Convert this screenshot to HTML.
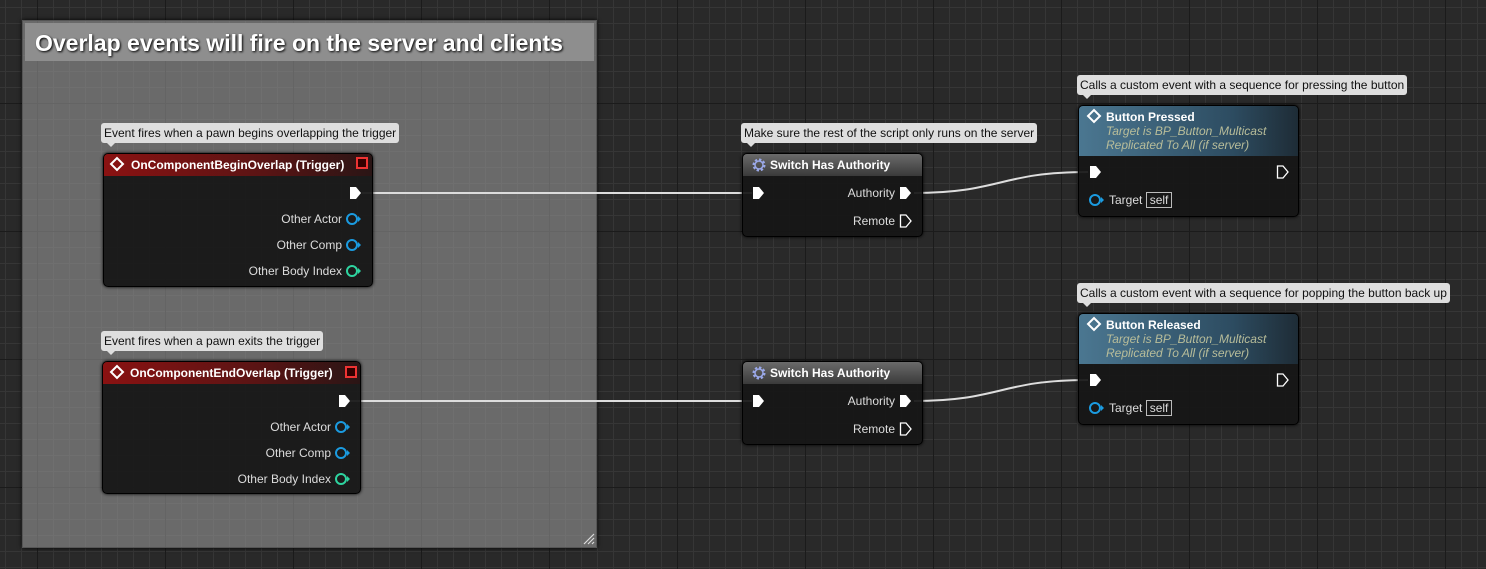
<!DOCTYPE html>
<html><head><style>
*{margin:0;padding:0;box-sizing:border-box}
body{width:1486px;height:569px;overflow:hidden;position:relative;font-family:"Liberation Sans",sans-serif;
background-color:#292929;
background-image:linear-gradient(90deg,#1b1b1b 1px,transparent 1px),linear-gradient(0deg,#1b1b1b 1px,transparent 1px),linear-gradient(90deg,#363636 1px,transparent 1px),linear-gradient(0deg,#363636 1px,transparent 1px);
background-size:128px 128px,128px 128px,16px 16px,16px 16px;
background-position:37px 0,0 104px,5px 0,0 8px;}
.abs{position:absolute}
.cm{left:22px;top:20px;width:575px;height:528px;background:rgba(150,150,150,.6);border:1px solid #555;box-shadow:0 0 4px #000}
.cmh{position:absolute;left:2px;top:2px;right:2px;height:38px;background:#8e8e8e;color:#fff;font-weight:bold;font-size:23px;line-height:40px;padding-left:10px;text-shadow:1px 1px 2px #000}
.tip{position:absolute;height:20px;background:#dedede;border-radius:3px;color:#111;font-size:12px;line-height:20px;padding:0 3px;white-space:nowrap}
.tip:after{content:"";position:absolute;left:6px;bottom:-4px;border:4px solid transparent;border-top-color:#dedede;border-bottom:0}
.node{position:absolute;background:rgba(22,22,22,.93);border:1px solid #000;border-radius:5px;box-shadow:0 0 3px #000;color:#ddd;font-size:12px}
.hd{height:22px;border-radius:4px 4px 0 0;color:#fff;font-weight:bold;font-size:12px;line-height:22px;padding-left:27px;position:relative}
.red{background:linear-gradient(90deg,#8a1212,#5a1414 60%,#2a1515)}
.gray{background:linear-gradient(180deg,#6a6a6a,#3a3a3a)}
.blue{background:linear-gradient(90deg,#4b7791,#2d4c61 70%,#1e2c36);height:50px;line-height:14px;padding-top:4px}
.sub{font-style:italic;font-weight:normal;color:#b8bd9a}
.lbl{position:absolute;font-size:12px;color:#ddd;white-space:nowrap}
svg{position:absolute;left:0;top:0}
</style></head><body>
<div class="abs cm"><div class="cmh">Overlap events will fire on the server and clients</div></div>
<svg width="1486" height="569">
<path d="M362 193 L752 193" stroke="#ddd" stroke-width="2" fill="none"/>
<path d="M914 193 C1000 193 1000 172 1088 172" stroke="#ddd" stroke-width="2" fill="none"/>
<path d="M350 401 L752 401" stroke="#ddd" stroke-width="2" fill="none"/>
<path d="M914 401 C1000 401 1000 380 1088 380" stroke="#ddd" stroke-width="2" fill="none"/>
<path d="M584 544 L594 534 M588 544 L594 538 M592 544 L594 542" stroke="#ddd" stroke-width="1.2"/>
</svg>

<div class="tip" style="left:101px;top:123px">Event fires when a pawn begins overlapping the trigger</div>
<div class="node" style="left:103px;top:153px;width:270px;height:134px"><div class="hd red">OnComponentBeginOverlap (Trigger)</div></div>
<div class="tip" style="left:101px;top:331px">Event fires when a pawn exits the trigger</div>
<div class="node" style="left:102px;top:361px;width:259px;height:133px"><div class="hd red">OnComponentEndOverlap (Trigger)</div></div>

<div class="tip" style="left:741px;top:123px">Make sure the rest of the script only runs on the server</div>
<div class="node" style="left:742px;top:153px;width:181px;height:84px"><div class="hd gray">Switch Has Authority</div></div>
<div class="node" style="left:742px;top:361px;width:181px;height:84px"><div class="hd gray">Switch Has Authority</div></div>

<div class="tip" style="left:1077px;top:75px">Calls a custom event with a sequence for pressing the button</div>
<div class="node" style="left:1078px;top:105px;width:221px;height:112px"><div class="hd blue">Button Pressed<br><span class="sub">Target is BP_Button_Multicast<br>Replicated To All (if server)</span></div></div>
<div class="tip" style="left:1077px;top:283px">Calls a custom event with a sequence for popping the button back up</div>
<div class="node" style="left:1078px;top:313px;width:221px;height:112px"><div class="hd blue">Button Released<br><span class="sub">Target is BP_Button_Multicast<br>Replicated To All (if server)</span></div></div>

<svg width="1486" height="569">
<defs>
<g id="ex"><path d="M0 -6 H6 L11 0 L6 6 H0 Z" fill="#fff"/></g>
<g id="exo"><path d="M0.5 -6 H6 L11 0 L6 6 H0.5 Z" fill="none" stroke="#fff" stroke-width="1.3"/></g>
<g id="dia"><path d="M0 0 L6 -6 L12 0 L6 6 Z" fill="none" stroke="#fff" stroke-width="2"/></g>
<g id="gear"><circle r="5" fill="none" stroke="#9aa8e8" stroke-width="3" stroke-dasharray="2.2 1.7"/><circle r="4" fill="none" stroke="#9aa8e8" stroke-width="1.5"/></g>
</defs>
<use href="#dia" x="111" y="164"/><rect x="357" y="158" width="10" height="10" fill="#300" stroke="#e33" stroke-width="2"/>
<use href="#dia" x="111" y="372"/><rect x="346" y="367" width="10" height="10" fill="#300" stroke="#e33" stroke-width="2"/>
<use href="#dia" x="1088" y="116"/><use href="#dia" x="1088" y="324"/>
<g fill="none" stroke-width="2">
<circle cx="352" cy="219" r="5" stroke="#1b9be0"/><circle cx="352" cy="245" r="5" stroke="#1b9be0"/><circle cx="352" cy="271" r="5" stroke="#2ed4a0"/>
<circle cx="341" cy="427" r="5" stroke="#1b9be0"/><circle cx="341" cy="453" r="5" stroke="#1b9be0"/><circle cx="341" cy="479" r="5" stroke="#2ed4a0"/>
<circle cx="1095" cy="200" r="5" stroke="#1b9be0"/><circle cx="1095" cy="408" r="5" stroke="#1b9be0"/>
</g>
<g fill="#1b9be0"><path d="M358 216 L361 219 L358 222Z"/><path d="M358 242 L361 245 L358 248Z"/><path d="M347 424 L350 427 L347 430Z"/><path d="M347 450 L350 453 L347 456Z"/><path d="M1101 197 L1104 200 L1101 203Z"/><path d="M1101 405 L1104 408 L1101 411Z"/></g>
<g fill="#2ed4a0"><path d="M358 268 L361 271 L358 274Z"/><path d="M347 476 L350 479 L347 482Z"/></g>
<use href="#ex" x="350" y="193"/><use href="#ex" x="339" y="401"/>
<use href="#ex" x="753" y="193"/><use href="#ex" x="900" y="193"/><use href="#exo" x="900" y="221"/>
<use href="#ex" x="753" y="401"/><use href="#ex" x="900" y="401"/><use href="#exo" x="900" y="429"/>
<use href="#ex" x="1090" y="172"/><use href="#exo" x="1277" y="172"/>
<use href="#ex" x="1090" y="380"/><use href="#exo" x="1277" y="380"/>
<use href="#gear" x="759" y="165"/><use href="#gear" x="759" y="373"/>
</svg>
<div class="lbl" style="right:1144px;top:212px">Other Actor</div>
<div class="lbl" style="right:1144px;top:238px">Other Comp</div>
<div class="lbl" style="right:1144px;top:264px">Other Body Index</div>
<div class="lbl" style="right:1155px;top:420px">Other Actor</div>
<div class="lbl" style="right:1155px;top:446px">Other Comp</div>
<div class="lbl" style="right:1155px;top:472px">Other Body Index</div>
<div class="lbl" style="right:591px;top:186px">Authority</div>
<div class="lbl" style="right:591px;top:214px">Remote</div>
<div class="lbl" style="right:591px;top:394px">Authority</div>
<div class="lbl" style="right:591px;top:422px">Remote</div>
<div class="lbl" style="left:1109px;top:193px">Target <span style="border:1px solid #bbb;padding:0 3px">self</span></div>
<div class="lbl" style="left:1109px;top:401px">Target <span style="border:1px solid #bbb;padding:0 3px">self</span></div>
</body></html>
